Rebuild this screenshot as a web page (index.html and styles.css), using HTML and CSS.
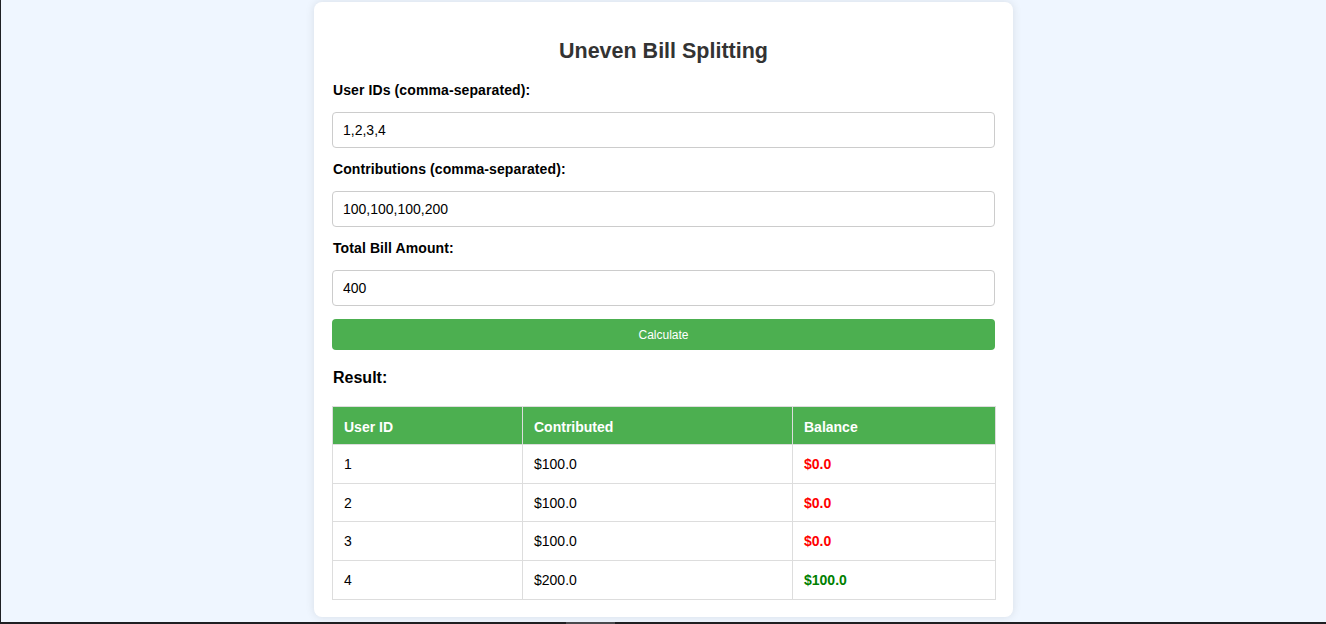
FILE: index.html
```html
<!DOCTYPE html>
<html lang="en">
<head>
<meta charset="utf-8">
<title>Uneven Bill Splitting</title>
<link rel="stylesheet" href="styles.css">
</head>
<body>
<div class="page">
  <div class="main">
    <div class="card">
      <h2 class="title">Uneven Bill Splitting</h2>
      <label class="field-label" for="ids">User IDs (comma-separated):</label>
      <input class="field-input" id="ids" type="text" value="1,2,3,4">
      <label class="field-label" for="contrib">Contributions (comma-separated):</label>
      <input class="field-input" id="contrib" type="text" value="100,100,100,200">
      <label class="field-label" for="total">Total Bill Amount:</label>
      <input class="field-input" id="total" type="text" value="400">
      <button class="calc-btn" type="button">Calculate</button>
      <h3 class="result-title">Result:</h3>
      <table class="result-table">
        <colgroup>
          <col class="col-id">
          <col class="col-contrib">
          <col class="col-balance">
        </colgroup>
        <thead>
          <tr><th>User ID</th><th>Contributed</th><th>Balance</th></tr>
        </thead>
        <tbody>
          <tr><td>1</td><td>$100.0</td><td class="neg">$0.0</td></tr>
          <tr><td>2</td><td>$100.0</td><td class="neg">$0.0</td></tr>
          <tr><td>3</td><td>$100.0</td><td class="neg">$0.0</td></tr>
          <tr><td>4</td><td>$200.0</td><td class="pos">$100.0</td></tr>
        </tbody>
      </table>
    </div>
  </div>
  <div class="statusbar"><div class="thumb"></div></div>
</div>
</body>
</html>
```
FILE: styles.css
```css
html, body {
  margin: 0;
  padding: 0;
}
body {
  background: #eff6ff;
  font-family: "Liberation Sans", Arial, sans-serif;
  color: #000;
}
.page {
  height: 100vh;
  box-sizing: border-box;
  border-left: 1px solid #1e2024;
  display: flex;
  flex-direction: column;
  overflow: hidden;
}
.main {
  flex: 1;
  min-height: 0;
}
.card {
  width: 699px;
  box-sizing: border-box;
  margin: 2px auto 0;
  padding: 0 18px 17px;
  background: #fff;
  border-radius: 8px;
  box-shadow: 0 0 10px rgba(0, 0, 0, 0.1);
  display: flex;
  flex-direction: column;
}
.title {
  margin: 37px 0 18px;
  font-size: 21.5px;
  line-height: 25px;
  font-weight: bold;
  color: #333;
  text-align: center;
}
.field-label {
  display: block;
  font-size: 14px;
  line-height: 16px;
  font-weight: bold;
  letter-spacing: 0.1px;
  margin: 0 0 14px 1px;
}
.field-input {
  display: block;
  width: 100%;
  height: 36px;
  box-sizing: border-box;
  margin: 0 0 13px;
  padding: 0 10px;
  border: 1px solid #ccc;
  border-radius: 4px;
  font-family: "Liberation Sans", Arial, sans-serif;
  font-size: 14px;
  color: #000;
  background: #fff;
}
.calc-btn {
  display: block;
  width: 100%;
  height: 31px;
  margin: 0;
  padding: 0;
  border: none;
  border-radius: 4px;
  background: #4caf50;
  color: #fff;
  font-family: "Liberation Sans", Arial, sans-serif;
  font-size: 12px;
}
.result-title {
  margin: 19px 0 19px 1px;
  font-size: 16px;
  line-height: 18px;
  font-weight: bold;
}
.result-table {
  width: 100%;
  border-collapse: collapse;
  table-layout: fixed;
  font-size: 14px;
}
.col-id { width: 190px; }
.col-contrib { width: 270px; }
.col-balance { width: 203px; }
.result-table th,
.result-table td {
  border: 1px solid #ddd;
  padding: 11px 11px;
  line-height: 16px;
  text-align: left;
}
.result-table td {
  padding-top: 11px;
  padding-bottom: 10.7px;
}
.result-table th {
  background: #4caf50;
  color: #fff;
  font-weight: bold;
  padding-top: 12px;
  padding-bottom: 9px;
}
.result-table td.neg {
  color: #f00;
  font-weight: bold;
}
.result-table td.pos {
  color: #008000;
  font-weight: bold;
}
.statusbar {
  height: 2px;
  background: #1f1f22;
  flex: none;
}
.thumb {
  width: 49px;
  height: 2px;
  margin-left: 565px;
  background: #4a4a4e;
}
```
